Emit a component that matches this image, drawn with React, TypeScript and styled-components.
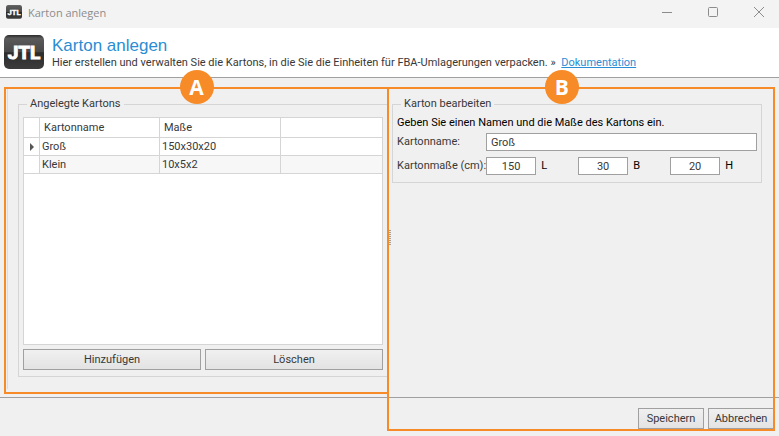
import React, { useState } from "react";
import styled, { createGlobalStyle } from "styled-components";

const color = {
  surface: "#f0f0f0",
  line: "#a0a0a0",
  soft: "#d5d5d5",
  text: "#383838",
  accent: "#2a8dd4",
  mark: "#f68b27",
};

const GlobalStyle = createGlobalStyle`
  *, *::before, *::after { box-sizing: border-box; }
  body {
    margin: 0;
    background: ${color.surface};
    color: ${color.text};
    font-family: Roboto, "Liberation Sans", sans-serif;
    font-size: 11px;
    line-height: 16px;
  }
  button, input { font: inherit; color: inherit; }
`;

const Window = styled.div`
  display: flex;
  flex-direction: column;
  min-height: 100vh;
`;

const TitleBar = styled.header`
  display: flex;
  align-items: center;
  gap: 6px;
  height: 28px;
  padding: 0 0 4px 6px;
  background: #f3f3f3;
  color: #8c8c8c;
  font-family: "Open Sans", "Noto Sans", sans-serif;
`;

const WindowTitle = styled.span`
  flex: 1;
  padding-top: 2px;
`;

const WindowButton = styled.button`
  display: grid;
  place-items: center;
  width: 40px;
  height: 24px;
  padding: 0;
  border: 0;
  background: none;
  color: #8c8c8c;
`;

const Banner = styled.section`
  display: flex;
  align-items: flex-start;
  gap: 8px;
  padding: 7px 4px 6px;
  border-bottom: 1px solid ${color.line};
  background: #fff;
`;

const Heading = styled.h1`
  margin: 0;
  padding-top: 1px;
  color: ${color.accent};
  font-family: "Liberation Sans", Arial, sans-serif;
  font-size: 17px;
  font-weight: 400;
  line-height: 19px;
`;

const Intro = styled.p`
  margin: 0;
`;

const DocLink = styled.a`
  margin-left: 3px;
  color: ${color.accent};
`;

const Workspace = styled.main`
  flex: 1;
  display: grid;
  grid-template-columns: minmax(0, 387fr) minmax(0, 392fr);
  grid-template-rows: 1fr auto;
`;

const ListPane = styled.section`
  grid-area: 1 / 1;
  display: flex;
  margin: 11px 0 8px 7px;
  padding: 7px 0 12px 10px;
  border-left: 1px solid #dcdcdc;
`;

const EditPane = styled.section`
  grid-area: 1 / 2;
  display: flex;
  align-items: center;
  padding-right: 17px;
`;

const Splitter = styled.div`
  flex: none;
  width: 2px;
  height: 15px;
  margin: 0 1px 0 2px;
  background: repeating-linear-gradient(${color.line} 0 1px, transparent 1px 2px);
`;

const Group = styled.fieldset<{ $open?: boolean }>`
  flex: 1;
  align-self: ${(p) => (p.$open ? "stretch" : "flex-start")};
  display: flex;
  flex-direction: column;
  min-width: 0;
  margin: ${(p) => (p.$open ? "0" : "18px 0 0")};
  padding: ${(p) => (p.$open ? "5px 4px 6px" : "3px 4px 7px")};
  border: 1px solid ${color.soft};
  border-right-width: ${(p) => (p.$open ? 0 : 1)}px;
`;

const GroupTitle = styled.legend`
  margin-left: 4px;
  padding: 0 3px;
`;

const GridBox = styled.div`
  flex: 1;
  border: 1px solid ${color.soft};
  background: #fff;
`;

const CartonTable = styled.table`
  width: 100%;
  border-collapse: separate;
  border-spacing: 0;
  table-layout: fixed;
`;

const Column = styled.col<{ $width?: number }>`
  width: ${(p) => (p.$width ? `${p.$width}px` : "auto")};
`;

const HeadCell = styled.th`
  height: 20px;
  padding: 0 4px;
  border-right: 1px solid ${color.soft};
  border-bottom: 1px solid ${color.soft};
  font-weight: 400;
  text-align: left;
  &:last-child { border-right: 0; }
`;

const Row = styled.tr`
  &:nth-child(even) td:not(:first-child) { background: #f7f7f7; }
`;

const Cell = styled.td`
  height: 18px;
  padding: 0 2px;
  border-right: 1px solid ${color.soft};
  border-bottom: 1px solid ${color.soft};
  &:last-child { border-right: 0; }
`;

const RowMarker = styled.svg`
  display: block;
  margin-left: 4px;
`;

const Button = styled.button<{ $grow?: boolean }>`
  flex: ${(p) => (p.$grow ? "1" : "0 0 66px")};
  height: 21px;
  padding: 0;
  border: 1px solid ${color.line};
  background: linear-gradient(#f0f0f0, #e3e3e3);
  line-height: 16px;
`;

const ListActions = styled.div`
  display: flex;
  gap: 4px;
  margin-top: 4px;
`;

const Hint = styled.p`
  margin: 0 0 2px;
  color: #000;
`;

const FieldRow = styled.div`
  display: flex;
  align-items: center;
  & + & { margin-top: 6px; }
`;

const FieldLabel = styled.label`
  flex: 0 0 89px;
  white-space: nowrap;
`;

const NameInput = styled.input`
  flex: 1;
  min-width: 0;
  height: 18px;
  padding: 0 4px;
  border: 1px solid ${color.line};
  background: #fff;
`;

const Sizes = styled.div`
  display: flex;
  gap: 32px;
`;

const SizeLabel = styled.label`
  display: flex;
  align-items: center;
  gap: 5px;
  width: 60px;
  color: #000;
`;

const SizeInput = styled.input`
  flex: none;
  width: 50px;
  height: 18px;
  padding: 0;
  border: 1px solid ${color.line};
  background: #fff;
  color: ${color.text};
  text-align: center;
`;

const Footer = styled.footer`
  grid-area: 2 / 1 / 3 / -1;
  display: flex;
  justify-content: flex-end;
  gap: 4px;
  padding: 10px 5px 7px;
  border-top: 1px solid ${color.line};
`;

const Highlight = styled.div<{ $tall?: boolean }>`
  grid-area: ${(p) => (p.$tall ? "1 / 2 / 3 / 3" : "1 / 1")};
  position: relative;
  z-index: 1;
  margin: ${(p) => (p.$tall ? "9px 4px 5px 0" : "9px -2px 3px 4px")};
  border: 2px solid ${color.mark};
  pointer-events: none;
`;

const Badge = styled.span<{ $at: string }>`
  position: absolute;
  top: -19px;
  left: ${(p) => p.$at};
  display: grid;
  place-items: center;
  width: 34px;
  height: 34px;
  margin-left: -17px;
  border-radius: 50%;
  background: ${color.mark};
  color: #fff;
  font-family: "Open Sans", sans-serif;
  font-size: 21px;
  font-weight: 700;
  line-height: 34px;
`;

const LogoSvg = styled.svg`
  flex: none;
  display: block;
`;

function Logo({ width, height, id }: { width: number; height: number; id: string }) {
  return (
    <LogoSvg width={width} height={height} viewBox="0 0 40 34" role="img" aria-label="JTL">
      <defs>
        <linearGradient id={id} x1="0" y1="0" x2="0" y2="1">
          <stop offset="0" stopColor="#2b2b2b" />
          <stop offset="0.1" stopColor="#5a5a5a" />
          <stop offset="0.5" stopColor="#484848" />
          <stop offset="0.52" stopColor="#2c2c2c" />
          <stop offset="1" stopColor="#3c3c3c" />
        </linearGradient>
      </defs>
      <rect x="0" y="0" width="40" height="34" rx="5" fill={`url(#${id})`} />
      <text
        x="20"
        y="24"
        textAnchor="middle"
        fontFamily="Roboto, 'Liberation Sans', sans-serif"
        fontSize="19"
        fontWeight="700"
        fill="#fff"
        stroke="#fff"
        strokeWidth="1"
      >
        JTL
      </text>
    </LogoSvg>
  );
}

const cartons = [
  { name: "Groß", size: [150, 30, 20] },
  { name: "Klein", size: [10, 5, 2] },
];

export default function App() {
  const [selected, setSelected] = useState(0);
  const current = cartons[selected];
  return (
    <Window>
      <GlobalStyle />
      <TitleBar>
        <Logo width={16} height={14} id="logo-small" />
        <WindowTitle>Karton anlegen</WindowTitle>
        <WindowButton type="button" aria-label="Minimieren">
          <svg width="10" height="10" fill="none" stroke="currentColor"><path d="M0 5.5h10" /></svg>
        </WindowButton>
        <WindowButton type="button" aria-label="Maximieren">
          <svg width="10" height="10" fill="none" stroke="currentColor"><rect x="0.5" y="0.5" width="9" height="9" rx="1" /></svg>
        </WindowButton>
        <WindowButton type="button" aria-label="Schließen">
          <svg width="10" height="10" fill="none" stroke="currentColor"><path d="M0 0l10 10M10 0L0 10" /></svg>
        </WindowButton>
      </TitleBar>
      <Banner>
        <Logo width={40} height={34} id="logo-large" />
        <div>
          <Heading>Karton anlegen</Heading>
          <Intro>
            Hier erstellen und verwalten Sie die Kartons, in die Sie die Einheiten für FBA-Umlagerungen verpacken. »{" "}
            <DocLink href="#dokumentation">Dokumentation</DocLink>
          </Intro>
        </div>
      </Banner>
      <Workspace>
        <ListPane>
          <Group $open>
            <GroupTitle>Angelegte Kartons</GroupTitle>
            <GridBox>
              <CartonTable>
                <colgroup>
                  <Column $width={16} />
                  <Column $width={120} />
                  <Column $width={121} />
                  <Column />
                </colgroup>
                <thead>
                  <tr>
                    <HeadCell />
                    <HeadCell scope="col">Kartonname</HeadCell>
                    <HeadCell scope="col">Maße</HeadCell>
                    <HeadCell />
                  </tr>
                </thead>
                <tbody>
                  {cartons.map((carton, index) => (
                    <Row key={carton.name} onClick={() => setSelected(index)}>
                      <Cell>
                        {index === selected && (
                          <RowMarker width="5" height="8"><path d="M0 0l4 4-4 4z" fill="#555" /></RowMarker>
                        )}
                      </Cell>
                      <Cell>{carton.name}</Cell>
                      <Cell>{carton.size.join("x")}</Cell>
                      <Cell />
                    </Row>
                  ))}
                </tbody>
              </CartonTable>
            </GridBox>
            <ListActions>
              <Button type="button" $grow>Hinzufügen</Button>
              <Button type="button" $grow>Löschen</Button>
            </ListActions>
          </Group>
        </ListPane>
        <EditPane key={current.name}>
          <Splitter />
          <Group>
            <GroupTitle>Karton bearbeiten</GroupTitle>
            <Hint>Geben Sie einen Namen und die Maße des Kartons ein.</Hint>
            <FieldRow>
              <FieldLabel htmlFor="carton-name">Kartonname:</FieldLabel>
              <NameInput id="carton-name" defaultValue={current.name} />
            </FieldRow>
            <FieldRow>
              <FieldLabel htmlFor="size-L">Kartonmaße (cm):</FieldLabel>
              <Sizes>
                {["L", "B", "H"].map((side, index) => (
                  <SizeLabel key={side}>
                    <SizeInput id={`size-${side}`} defaultValue={current.size[index]} />
                    {side}
                  </SizeLabel>
                ))}
              </Sizes>
            </FieldRow>
          </Group>
        </EditPane>
        <Footer>
          <Button type="button">Speichern</Button>
          <Button type="button">Abbrechen</Button>
        </Footer>
        <Highlight>
          <Badge $at="50%">A</Badge>
        </Highlight>
        <Highlight $tall>
          <Badge $at="45%">B</Badge>
        </Highlight>
      </Workspace>
    </Window>
  );
}
